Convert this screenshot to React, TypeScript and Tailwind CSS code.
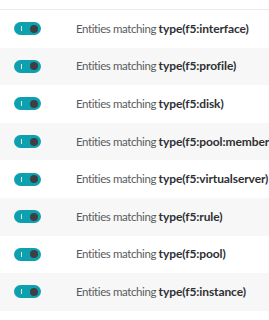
import React from "react";

const items = [
  "interface",
  "profile",
  "disk",
  "pool:member",
  "virtualserver",
  "rule",
  "pool",
  "instance",
];

function Toggle() {
  return (
    <div className="relative w-[27px] h-[13px] rounded-full bg-[#0fa0b0] flex items-center shrink-0">
      <div className="ml-[7px] w-[1px] h-[5px] bg-white/80" />
      <div className="absolute right-[3px] top-[2.5px] w-[8px] h-[8px] rounded-full bg-[#3d3f42]" />
    </div>
  );
}

export default function App() {
  return (
    <div
      className="w-[269px] h-[320px] bg-white overflow-hidden"
      style={{ fontFamily: "Lato, 'Open Sans', sans-serif" }}
    >
      <div className="h-[10px] border-b border-[#ececec]" />
      {items.map((it, i) => (
        <div
          key={it}
          className={`h-[37.6px] flex items-center ${i % 2 === 1 ? "bg-[#f7f7f7]" : "bg-white"}`}
        >
          <div className="pl-[14px] w-[76px] shrink-0 flex">
            <Toggle />
          </div>
          <div className="text-[11.5px] tracking-[-0.4px] text-[#5a5b5e] whitespace-nowrap">
            Entities matching{" "}
            <span className="text-[12px] tracking-[-0.1px] font-bold text-[#2f3033]">type(f5:{it})</span>
          </div>
        </div>
      ))}
    </div>
  );
}
